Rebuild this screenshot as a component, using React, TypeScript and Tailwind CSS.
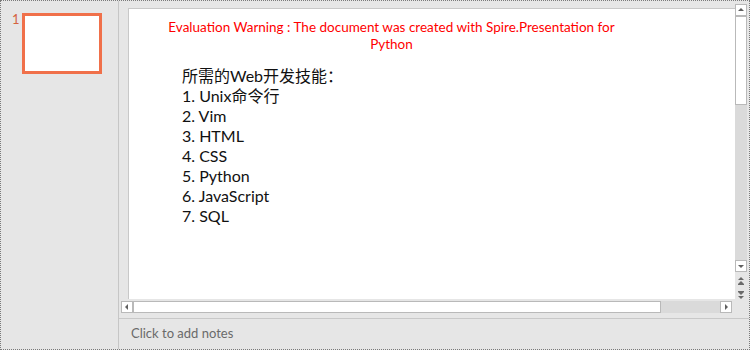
const skills = ['1. Unix命令行', '2. Vim', '3. HTML', '4. CSS', '5. Python', '6. JavaScript', '7. SQL'];

function Arrow({ dir }: { dir: 'up' | 'down' | 'left' | 'right' }) {
  const points = {
    up: '2,6 8,6 5,3',
    down: '2,4 8,4 5,7',
    left: '6,2 6,8 3,5',
    right: '4,2 4,8 7,5',
  }[dir];
  return (
    <svg width="10" height="10" viewBox="0 0 10 10">
      <polygon points={points} fill="#606060" />
    </svg>
  );
}

function ScrollButton({ dir }: { dir: 'up' | 'down' | 'left' | 'right' }) {
  return (
    <div className="w-[12px] h-[12px] bg-white border border-[#b9b9b9] flex items-center justify-center shrink-0">
      <Arrow dir={dir} />
    </div>
  );
}

function PageArrow({ up }: { up: boolean }) {
  return (
    <svg width="10" height="10" viewBox="0 0 10 10">
      {up ? (
        <>
          <polygon points="2,4 8,4 5,1" fill="#6a6a6a" />
          <polygon points="2,8 8,8 5,5" fill="#6a6a6a" />
          <rect x="2" y="8" width="6" height="1" fill="#6a6a6a" />
        </>
      ) : (
        <>
          <rect x="2" y="1" width="6" height="1" fill="#6a6a6a" />
          <polygon points="2,2 8,2 5,5" fill="#6a6a6a" />
          <polygon points="2,6 8,6 5,9" fill="#6a6a6a" />
        </>
      )}
    </svg>
  );
}

export default function App() {
  return (
    <div
      className="w-[750px] h-[350px] border border-dotted border-[#7a7a7a] bg-[#e6e6e6] flex overflow-hidden"
      style={{ fontFamily: '"Lato", "Noto Sans CJK SC", sans-serif' }}
    >
      {/* slide thumbnails */}
      <div className="w-[118px] shrink-0 border-r border-[#c6c6c6] flex gap-[2px] pl-[11px] pt-[12px]">
        <span className="text-[#d4623f] text-[13px] leading-[13px]">1</span>
        <div className="w-[80px] h-[61px] border-[3px] border-[#f0704a] bg-white" />
      </div>

      {/* editor */}
      <div className="flex-1 flex flex-col">
        <div className="flex flex-1 min-h-0">
          <div className="flex-1 flex flex-col">
            <div className="flex-1 pt-[7px] pl-[9px]">
              <div className="h-full bg-white border-l border-t border-[#c8c8c8] pt-[10px]">
                <div className="w-[465px] ml-[30px] text-center text-[#ff0000] text-[13.5px] leading-[17px]">
                  Evaluation Warning : The document was created with Spire.Presentation for Python
                </div>
                <div className="ml-[53px] mt-[13px] text-[#111] text-[16px] leading-[20px]">
                  <div>所需的Web开发技能：</div>
                  {skills.map((s) => (
                    <div key={s}>{s}</div>
                  ))}
                </div>
              </div>
            </div>
            {/* horizontal scrollbar */}
            <div className="h-[16px] flex items-center pl-[2px] pt-[2px] pb-[2px]">
              <ScrollButton dir="left" />
              <div className="flex-1 h-[12px] bg-[#dadada] flex">
                <div className="w-[528px] h-full bg-white border border-[#b9b9b9]" />
              </div>
              <ScrollButton dir="right" />
              <div className="w-[3px]" />
            </div>
          </div>
          {/* vertical scrollbar */}
          <div className="w-[14px] flex flex-col items-start pt-[3px]">
            <ScrollButton dir="up" />
            <div className="w-[12px] h-[244px] bg-[#dadada] flex flex-col">
              <div className="h-[89px] w-full bg-white border border-[#b9b9b9]" />
            </div>
            <ScrollButton dir="down" />
            <div className="w-[12px] flex flex-col items-center mt-[4px] gap-[4px]">
              <PageArrow up />
              <PageArrow up={false} />
            </div>
          </div>
        </div>
        {/* notes */}
        <div className="h-[31px] border-t border-[#c8c8c8] mt-[3px] pl-[12px] pt-[5px] text-[13px] text-[#6a6a6a] shrink-0">
          Click to add notes
        </div>
      </div>
    </div>
  );
}
